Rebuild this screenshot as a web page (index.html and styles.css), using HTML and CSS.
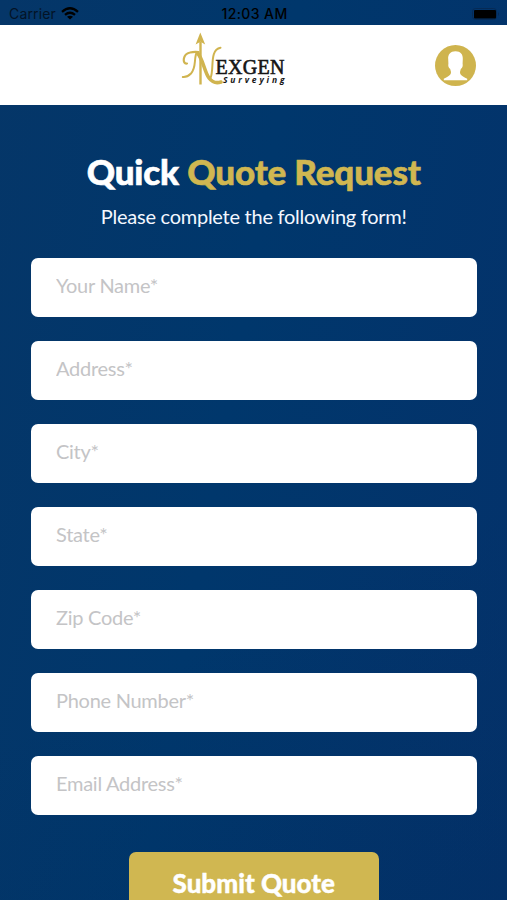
FILE: index.html
```html
<!DOCTYPE html>
<html lang="en">
<head>
<meta charset="utf-8">
<meta name="viewport" content="width=device-width, initial-scale=1">
<title>Quick Quote Request</title>
<link rel="stylesheet" href="styles.css">
</head>
<body>
<div class="screen">
  <div class="status">
    <div class="carrier"><span>Carrier</span>
      <svg class="wifi" width="18" height="13" viewBox="0 0 18 13" fill="none" stroke="#000" stroke-width="2.3"><path d="M1 4.8Q9-2.2 17 4.8M4 7.8Q9 3.6 14 7.8"/><path d="M9 12.6 6 9.8Q9 7.6 12 9.8Z" fill="#000" stroke="none"/></svg>
    </div>
    <div class="time">12:03 AM</div>
    <svg class="battery" width="28" height="12" viewBox="0 0 28 12"><rect x=".5" y=".5" width="24" height="11" rx="3" fill="none" stroke="#062a55"/><rect x="2" y="2" width="22" height="8.5" rx="1" fill="#000"/><path d="M26 4q2 2 0 4z" fill="#062a55"/></svg>
  </div>
  <header class="header">
    <svg class="logo" width="110" height="60" viewBox="0 0 110 60">
      <g fill="none" stroke="#d0b44f" stroke-linecap="round">
        <path d="M20.5 12V54.5" stroke-width="2.4" stroke-linecap="butt"/>
        <path d="M7 33.500C2 34.500 2.500 24 10 22.500Q14 21.500 18.500 22" stroke-width="2.2"/>
        <path d="M16 24C14 32 16 38 11 43.500Q7 47.500 2.800 47" stroke-width="2"/>
        <path d="M17.500 23C23 29 24.500 42 29 48Q34 54.500 41 52" stroke-width="3.6"/>
        <path d="M30.500 48C34.500 39 29 20 40.500 17.800" stroke-width="2"/>
      </g>
      <path d="M20.300 2.500 25.200 14.500 20.500 11.800 15.600 14.500Z" fill="#d0b44f"/>
      <text class="brand" x="35.500" y="43.500" textLength="69">EXGEN</text>
      <text class="tagline" x="43" y="52.800" textLength="61.500">Surveying</text>
    </svg>
    <svg class="avatar" width="41" height="41" viewBox="0 0 41 41"><circle cx="20.500" cy="20.500" r="20.500" fill="#cfb44e"/><path d="M20.500 6.200C25.500 6.200 28.200 9.500 27.800 14L27.600 18.500Q28.300 22 25.800 24L25 27C25 30.500 28 31.200 32.200 33.800V35.300H8.800V33.800C13 31.200 16 30.500 16 27L15.200 24Q12.700 22 13.400 18.500L13.200 14C12.800 9.500 15.500 6.200 20.500 6.200Z" fill="#fff"/></svg>
  </header>
  <main class="content">
    <h1 class="title">Quick <span class="accent">Quote Request</span></h1>
    <p class="subtitle">Please complete the following form!</p>
    <form class="form">
      <input class="field" type="text" placeholder="Your Name*">
      <input class="field" type="text" placeholder="Address*">
      <input class="field" type="text" placeholder="City*">
      <input class="field" type="text" placeholder="State*">
      <input class="field" type="text" placeholder="Zip Code*">
      <input class="field" type="text" placeholder="Phone Number*">
      <input class="field" type="text" placeholder="Email Address*">
      <button class="submit" type="button">Submit Quote</button>
    </form>
  </main>
</div>
</body>
</html>
```
FILE: styles.css
```css
* { box-sizing: border-box; }
body { margin: 0; font-family: Lato, sans-serif; }
.screen {
  height: 900px;
  overflow: hidden;
  display: flex;
  flex-direction: column;
  background:
    linear-gradient(155deg, transparent 65%, rgba(0, 42, 90, .25) 100%),
    linear-gradient(100deg, #053668 0%, #00376c 45%, #04326b 100%);
}
.status {
  flex: none;
  height: 25px;
  padding: 2px 7px 0 9px;
  display: grid;
  grid-template-columns: 1fr auto 1fr;
  align-items: center;
  font: 14px/20px Inter, sans-serif;
  color: #000;
}
.carrier { display: flex; align-items: center; gap: 5px; color: #031326; letter-spacing: .15px; }
.time { font-weight: 500; letter-spacing: .4px; }
.battery { justify-self: end; }
.header {
  flex: none;
  height: 80px;
  padding: 0 31px 0 180px;
  display: flex;
  align-items: center;
  justify-content: space-between;
  background: #fff;
}
.logo { margin-bottom: 10px; overflow: visible; }
.brand { font: 20px "Liberation Serif", serif; fill: #161616; stroke: #161616; stroke-width: .6px; }
.tagline { font: italic bold 8.5px "Open Sans", sans-serif; fill: #161616; }
.content { flex: none; padding: 43px 30.5px 0 31px; }
.title {
  margin: 0;
  text-align: center;
  font-size: 35px;
  line-height: 46px;
  font-weight: 900;
  letter-spacing: -.15px;
  -webkit-text-stroke: .6px currentColor;
  color: #fff;
}
.accent { color: #d0b751; }
.subtitle {
  margin: 5px 0 0;
  height: 54px;
  text-align: center;
  font-size: 20px;
  line-height: 34px;
  letter-spacing: -.26px;
  color: #f3f7ff;
}
.form { margin-top: 5.4px; display: flex; flex-direction: column; gap: 24px; }
.field {
  width: 100%;
  height: 59px;
  padding: 0 25px 5px;
  border: 0;
  border-radius: 7px;
  background: #fff;
  font: 20px Lato, sans-serif;
  letter-spacing: -.27px;
  color: #333;
}
.field::placeholder { color: #c4c4c6; opacity: 1; }
.submit {
  align-self: center;
  width: 250px;
  height: 62px;
  margin-top: 12.5px;
  padding: 0;
  border: 0;
  border-radius: 7px;
  background: #d0b751;
  font: 900 26px Lato, sans-serif;
  -webkit-text-stroke: .4px currentColor;
  color: #fff;
}
```
